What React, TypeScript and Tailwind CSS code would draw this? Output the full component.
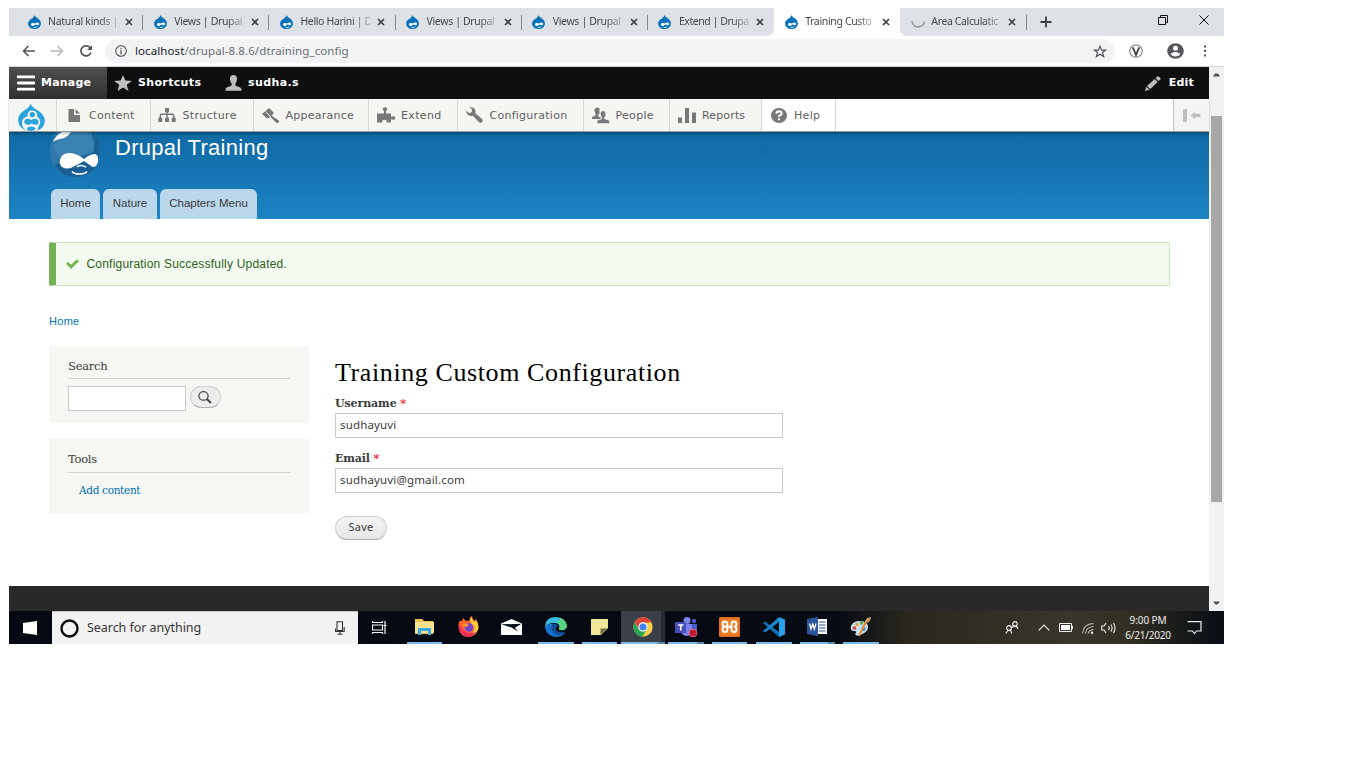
import React from "react";

const ui = "font-['Noto_Sans',sans-serif]";

function DropFavicon() {
  return (
    <svg width="13" height="14" viewBox="0 0 13 14">
      <path d="M6.600 0C7 2 9 2.600 10.600 4C12 5.200 12.900 6.600 12.900 8.400C12.900 11.600 10 14 6.500 14C3 14 .1 11.700 .1 8.400C.1 6.500 1.300 5.200 3 4C4.800 2.800 6 2 6.600 0Z" fill="#0b73b9" />
      <path d="M3 9.200C3.200 7.600 5.400 7.600 7 8.600C8.400 7.600 9.400 7.200 10.400 7.800C11.800 9 10.600 10.600 9.400 10.200C8.600 9.900 8 9.400 7.300 9.600C6.300 10.400 5.800 11 4.600 10.900C3.500 10.800 2.900 10.200 3 9.200Z" fill="#fff" />
      <path d="M5.600 12.300Q7.500 13 9 11.900" stroke="#fff" strokeWidth=".8" fill="none" />
    </svg>
  );
}

function TabClose() {
  return (
    <svg width="8" height="8" viewBox="0 0 8 8" className="shrink-0">
      <path d="M1 1L7 7M7 1L1 7" stroke="#3c4043" strokeWidth="1.700" />
    </svg>
  );
}

type TabProps = { title: string; track: string; active?: boolean; before?: boolean; loading?: boolean; noLine?: boolean };

function BrowserTab({ title, track, active, before, loading, noLine }: TabProps) {
  return (
    <div
      className={`flex h-[28px] w-[126.200px] shrink-0 items-center pl-[10.500px] ${
        active ? "rounded-t-[7px] bg-white" : "bg-[#dee1e6]"
      } ${before ? "rounded-br-[7px]" : ""} ${loading ? "rounded-bl-[7px]" : ""}`}
    >
      <div className="flex w-[20.500px] shrink-0 items-center">
        {loading ? (
          <svg width="15" height="14" viewBox="0 0 15 14">
            <path d="M1 6A6.300 6.300 0 0 0 13.500 6.500" stroke="#9a9da1" strokeWidth="1.700" fill="none" />
          </svg>
        ) : (
          <DropFavicon />
        )}
      </div>
      <div className={`${ui} w-[70px] text-[10.500px] whitespace-nowrap text-[#45484c] [mask-image:linear-gradient(90deg,#000_74%,#0004_100%)] ${track}`}>
        {title}
      </div>
      <div className="ml-[7px] flex">
        <TabClose />
      </div>
      {!noLine && <div className="ml-auto h-[15px] w-px bg-[#85888c]" />}
    </div>
  );
}

function TabStrip() {
  return (
    <div className="flex h-[28px] bg-white">
      <div className="h-full w-[8px] bg-[#dee1e6]" />
      <BrowserTab title="Natural kinds |" track="tracking-[-0.280px]" />
      <BrowserTab title="Views | Drupal" track="tracking-[-0.350px]" />
      <BrowserTab title="Hello Harini | D" track="tracking-[-0.350px]" />
      <BrowserTab title="Views | Drupal" track="tracking-[-0.350px]" />
      <BrowserTab title="Views | Drupal" track="tracking-[-0.350px]" />
      <BrowserTab title="Extend | Drupa" track="tracking-[-0.450px]" before noLine />
      <BrowserTab title="Training Custo" track="tracking-[-0.350px]" active noLine />
      <BrowserTab title="Area Calculatic" track="tracking-[-0.380px]" loading />
      <div className="flex flex-1 items-center bg-[#dee1e6] pl-[13px]">
        <svg width="12" height="12" viewBox="0 0 12 12">
          <path d="M6 .5V11.500M.5 6H11.500" stroke="#3c4043" strokeWidth="1.800" />
        </svg>
        <svg width="10" height="10" viewBox="0 0 10 10" className="mb-[5px] ml-[106px]">
          <path d="M.5 2.500H7.500V9.500H.5ZM2.500 2.500V.5H9.500V7.500H7.500" stroke="#111" fill="none" />
        </svg>
        <svg width="10" height="10" viewBox="0 0 10 10" className="mb-[5px] ml-[31px]">
          <path d="M.5 .5L9.500 9.500M9.500 .5L.5 9.500" stroke="#111" />
        </svg>
      </div>
    </div>
  );
}

function AddressBar() {
  return (
    <div className="flex h-[31px] items-center border-b border-[#d5d7da] bg-white pl-[13px]">
      <svg width="13" height="12" viewBox="0 0 13 12">
        <path d="M13 6H1.500M6.500 1L1.500 6L6.500 11" stroke="#505357" strokeWidth="1.600" fill="none" />
      </svg>
      <svg width="13" height="12" viewBox="0 0 13 12" className="ml-[16px]">
        <path d="M0 6H11.500M6.500 1L11.500 6L6.500 11" stroke="#b4b6b9" strokeWidth="1.500" fill="none" />
      </svg>
      <svg width="14" height="12" viewBox="0 0 14 12" className="ml-[15px]">
        <path d="M11.500 3.200A5.200 5 0 1 0 12 7.500" stroke="#505357" strokeWidth="1.700" fill="none" />
        <path d="M13 .3V5H8Z" fill="#505357" />
      </svg>
      <div className="ml-[12px] flex h-[24px] w-[1010px] items-center rounded-full bg-[#f1f3f4] pl-[10px]">
        <svg width="12" height="12" viewBox="0 0 12 12">
          <circle cx="6" cy="6" r="5.300" fill="none" stroke="#5f6368" strokeWidth="1.200" />
          <path d="M6 2.800V4.200M6 5.200V9.200" stroke="#5f6368" strokeWidth="1.400" />
        </svg>
        <div className={`${ui} ml-[8px] text-[11.500px] tracking-[0.090px] whitespace-nowrap text-[#6a6d71]`}>
          <span className="text-[#202124]">localhost</span>/drupal-8.8.6/dtraining_config
        </div>
        <svg width="14" height="13" viewBox="0 0 24 23" className="mr-[8px] ml-auto">
          <path d="M12 2L14.800 9H22L16.300 13.300L18.500 20.500L12 16.300L5.500 20.500L7.700 13.300L2 9H9.200Z" fill="none" stroke="#4e5155" strokeWidth="2" />
        </svg>
      </div>
      <svg width="14" height="14" viewBox="0 0 14 14" className="ml-[14px]">
        <circle cx="7" cy="7" r="6.200" fill="#fff" stroke="#8b8b8b" strokeWidth="1.300" />
        <path d="M3.800 3.300L7 10.800L10.200 3.300" fill="none" stroke="#444" strokeWidth="1.900" />
      </svg>
      <svg width="17" height="16" viewBox="0 0 17 16" className="ml-[24px]">
        <ellipse cx="8.500" cy="8" rx="8.300" ry="7.800" fill="#54575c" />
        <circle cx="8.500" cy="5.200" r="2.500" fill="#fff" />
        <path d="M3.500 11Q8.500 7 13.500 11Q11.500 13.600 8.500 13.600Q5.500 13.600 3.500 11Z" fill="#fff" />
      </svg>
      <svg width="3" height="12" viewBox="0 0 3 12" className="ml-[20px]">
        <path d="M0 .5h2v2H0zM0 5h2v2H0zM0 9.500h2v2H0z" fill="#505357" />
      </svg>
    </div>
  );
}

function AdminBar() {
  const label = "font-['DejaVu_Sans',sans-serif] text-[11px] font-bold text-white whitespace-nowrap pt-px";
  return (
    <div className="flex h-[32px] bg-[#0f0f0f]">
      <div className="flex w-[98px] items-center bg-linear-to-b from-[#505050] to-[#303030] pl-[8px]">
        <svg width="18" height="16" viewBox="0 0 18 16">
          <path d="M1 1.800H17M1 8H17M1 14.200H17" stroke="#fff" strokeWidth="2.800" strokeLinecap="round" />
        </svg>
        <div className={`${label} ml-[6px] tracking-[0.200px]`}>Manage</div>
      </div>
      <div className="flex w-[118px] items-center pl-[7px]">
        <svg width="18" height="16" viewBox="0 0 18 16">
          <path d="M9 0L11.300 5.600L18 6L12.700 9.800L14.500 16L9 12.400L3.500 16L5.300 9.800L0 6L6.700 5.600Z" fill="#bebebe" />
        </svg>
        <div className={`${label} ml-[6px] tracking-[0.350px]`}>Shortcuts</div>
      </div>
      <div className="flex items-center">
        <svg width="17" height="16" viewBox="0 0 17 16">
          <path d="M8.500 0C11 0 12.200 1.800 12 4.400C11.900 6.400 11.200 7.400 10.400 8.200V10.300C10.600 11.700 16.500 11.500 16.500 14.500V15.800H.5V14.500C.5 11.500 6.400 11.700 6.600 10.300V8.200C5.800 7.400 5.100 6.400 5 4.400C4.800 1.800 6 0 8.500 0Z" fill="#bebebe" />
        </svg>
        <div className={`${label} ml-[6px] tracking-[0.400px]`}>sudha.s</div>
      </div>
      <div className="ml-auto flex items-center pr-[15px]">
        <svg width="16" height="15" viewBox="0 0 16 15">
          <path d="M0 15L1.300 10.800L4.600 13.700ZM2 10L9.600 3L12.800 5.900L5.300 13ZM10.500 2.200L12.300 .6Q13 0 13.700 .6L15.500 2.200Q16 2.900 15.400 3.500L13.700 5.100Z" fill="#bebebe" />
        </svg>
        <div className={`${label} ml-[8px] tracking-[0.200px]`}>Edit</div>
      </div>
    </div>
  );
}

const g = "#787878";

function TrayItem({ w, pl, iconW, label, last, icon, track }: { w: string; pl: string; iconW: string; label: string; last?: boolean; icon: React.ReactNode; track: string }) {
  return (
    <div className={`flex h-full shrink-0 items-center border-r border-[#d7d7d5] ${w} ${pl} ${last ? "bg-white" : "bg-[#f5f5f2]"}`}>
      <div className={`shrink-0 ${iconW}`}>{icon}</div>
      <div className={`pt-[2px] font-['DejaVu_Sans',sans-serif] text-[11px] whitespace-nowrap text-[#606060] ${track}`}>{label}</div>
    </div>
  );
}

function AdminTray() {
  return (
    <div className="relative z-10 flex h-[33px] border-b border-[#9a9a96] bg-white shadow-[0_2px_2px_rgba(0,0,0,0.250)]">
      <div className="flex w-[48px] items-start justify-center border-r border-[#d7d7d5] bg-[#f5f5f2] pt-[4px] pr-[2px]">
        <svg width="27" height="28" viewBox="0 0 27 28">
          <path d="M12.500 0C13 3.800 17 5.500 20 7.500C24.500 10.500 26.800 13.500 26.800 17.500C26.800 21.500 25 24.500 22 26.500L19.500 27.300C13 28.500 9.500 28 6.500 26.700C2.500 24.500 .2 21.500 .2 17C.2 12.500 3 9.500 6.500 7.200C9.500 5 12.400 3.500 12.500 0Z" fill="#2ba3dc" />
          <path d="M14 7.600C18 7.600 20 10.500 18.800 13.500C22.800 15.500 23 20.500 20.500 23.500L19.500 27.600H8L5.200 24.500C3 20.500 3.600 15.700 7.600 14.200C9.200 13.600 9.800 13 9.700 11.700C9.800 9.200 11.500 7.600 14 7.600Z" fill="#f5f5f2" />
          <circle cx="14.300" cy="11.700" r="2.600" fill="#2ba3dc" />
          <path d="M6.300 18.800C6.400 15.600 10.500 14.800 13.300 17.300C16 14.900 20.600 15.500 20.600 19C20.500 22.300 16.500 22.500 13.800 20.600C10.500 22.800 6.300 22 6.300 18.800Z" fill="#2ba3dc" />
          <path d="M8.500 25.300Q13 21.700 18 25.300Q16 28 12.500 28Q10 27.800 8.500 25.300Z" fill="#2ba3dc" />
        </svg>
      </div>
      <TrayItem w="w-[94px]" pl="pl-[11px]" iconW="w-[21px]" label="Content" track="tracking-[0.250px]"
        icon={<svg width="12" height="13" viewBox="0 0 12 13"><path d="M.5 0H6V6H12V13H.5ZM7.500 0L12 4.500H7.500Z" fill={g} /></svg>} />
      <TrayItem w="w-[103px]" pl="pl-[7px]" iconW="w-[24.500px]" label="Structure" track="tracking-[0.350px]"
        icon={<svg width="18" height="14" viewBox="0 0 18 14"><path d="M7 0h4v4.200h-4zM.3 9.800h4V14h-4zM7 9.800h4V14h-4zM13.700 9.800h4V14h-4z" fill={g} /><path d="M9 3V10M2.300 10V7.500Q2.300 6.300 3.500 6.300H14.500Q15.700 6.300 15.700 7.500V10" fill="none" stroke={g} strokeWidth="1.500" /></svg>} />
      <TrayItem w="w-[115px]" pl="pl-[8px]" iconW="w-[23.500px]" label="Appearance" track="tracking-[0.250px]"
        icon={<svg width="18" height="15" viewBox="0 0 18 15"><path d="M0 6L7 0L11.600 4.500Q11.800 6.500 9.600 7.400L16.800 12.600Q17.400 14.200 16 15Q14.800 15.200 14 14.400L8.200 8.700Q6.800 10.400 4.700 10.200Z" fill={g} /><path d="M3.400 3.600L8.700 8.700" stroke="#f5f5f2" /></svg>} />
      <TrayItem w="w-[89px]" pl="pl-[8px]" iconW="w-[24px]" label="Extend" track="tracking-[0.350px]"
        icon={<svg width="19" height="16" viewBox="0 0 19 16"><path d="M6 1Q8 -.5 10 1Q10.500 3.500 9 4V6.500H14V9.800Q18.400 8.300 18.400 11Q18.400 13.500 14 12.200V15.500H9.500V13.500Q7.300 12 5.300 13.500V15.500H0V6.500H7V4Q5.500 3.500 6 1Z" fill={g} /></svg>} />
      <TrayItem w="w-[126px]" pl="pl-[8px]" iconW="w-[23.500px]" label="Configuration" track="tracking-[0.250px]"
        icon={<svg width="17" height="16" viewBox="0 0 17 16"><path d="M3.300 .3Q7.500 -.3 9 2.500Q9.800 4.300 9.200 6L16.300 12.300Q17.300 14.300 15.500 15.500Q13.800 16.300 12.600 14.800L6.800 8.700Q4.500 9.800 2 8Q.2 6.500 0 3.800L3.500 6.300L6 4.800L5.800 2.200Z" fill={g} /></svg>} />
      <TrayItem w="w-[86px]" pl="pl-[8px]" iconW="w-[23.500px]" label="People" track="tracking-[0.300px]"
        icon={<svg width="18" height="17" viewBox="0 0 18 17"><path d="M2.500 2.500Q5 -1 7.500 1.500V7H6.500V10H8.500V12H0V10.500Q0 9.500 3.500 8.500V6.500Q2.300 4.500 2.500 2.500Z" fill={g} /><path d="M8.500 5Q11 2.500 13.700 5V8.500L12.700 10V12Q17.500 13 17.500 14V16.500H5V14Q5 13 9.600 12V10L8.500 8.500Z" fill={g} stroke="#f5f5f2" strokeWidth=".6" /></svg>} />
      <TrayItem w="w-[92px]" pl="pl-[8px]" iconW="w-[24px]" label="Reports" track="tracking-[0.150px]"
        icon={<svg width="18" height="15" viewBox="0 0 18 15"><path d="M0 9.500h4V15H0zM7 0h4v15H7zM14 4.500h4V15h-4z" fill={g} /></svg>} />
      <TrayItem w="w-[74px]" pl="pl-[9px]" iconW="w-[23px]" label="Help" track="tracking-[0.300px]" last
        icon={<svg width="16" height="15" viewBox="0 0 16 15"><ellipse cx="8" cy="7.500" rx="8" ry="7.500" fill={g} /><path d="M5.300 5.600Q5.500 3.200 8 3.200Q10.800 3.300 10.700 5.500Q10.500 6.700 8.900 7.400Q8 8 8 9M8 10.300V12.200" fill="none" stroke="#fff" strokeWidth="1.900" /></svg>} />
      <div className="ml-auto flex h-full w-[36px] items-center border-l border-[#c4c4c4] bg-[#f4f4f4] pl-[9px]">
        <svg width="18" height="13" viewBox="0 0 18 13">
          <path d="M0 0h4v13H0zM7.500 6.500L12 3V4.800H17.300V8.200H12V10Z" fill="#bfbfbf" />
        </svg>
      </div>
    </div>
  );
}

function SiteHeader() {
  const tab = "flex h-[30px] items-center justify-center rounded-t-[6px] bg-[#bbd7eb] font-['Liberation_Sans',sans-serif] text-[#3a3a3a] whitespace-nowrap";
  return (
    <div className="flex h-[87px] flex-col justify-between bg-linear-to-b from-[#0f69a3] to-[#1d84c4]">
      <div className="flex h-[47px] overflow-hidden pl-[40px]">
        <svg width="52" height="46" viewBox="0 0 52 46">
          <defs><clipPath id="drop"><path d="M8 0H44Q51 8 51 21Q50 34 41 41Q26 49 11 41Q1 34 1 20Q1 8 8 0Z" /></clipPath></defs>
          <path d="M8 0H44Q51 8 51 21Q50 34 41 41Q26 49 11 41Q1 34 1 20Q1 8 8 0Z" fill="#2f79aa" />
          <g clipPath="url(#drop)">
            <path d="M42 0Q49 15 41 22Q25 23 6 33Q13 47 29 46Q51 43 52 22V0Z" fill="#195f93" />
            <path d="M22 0H36Q47 8 45 20Q39 22 33 25Q21 16 12 26Q4 17 4 12Z" fill="#4489b5" opacity=".5" />
          </g>
          <path d="M4 10Q7 3 13 0H22Q18 6 11 7Q6 8 4 10Z" fill="#fff" />
          <path d="M11 28Q13 20 22 21Q29 22 35 27Q41 22 46 22Q50 23 49 30Q47 37 42 34Q38 31 35 29Q30 32 24 35Q18 38 13 35Q10 32 11 28Z" fill="#fff" />
          <path d="M28 35Q31 32 37 35M23 39.500Q25 42 30 42Q36 42 38 39.500" stroke="#fff" strokeWidth="1.600" fill="none" />
        </svg>
        <div className="mt-[3px] ml-[14px] font-['Liberation_Sans',sans-serif] text-[22px] leading-[26px] tracking-[0.290px] whitespace-nowrap text-white">Drupal Training</div>
      </div>
      <div className="flex gap-[3px] pl-[42px]">
        <div className={`${tab} w-[49px] text-[11.500px]`}>Home</div>
        <div className={`${tab} w-[54px] text-[11.500px]`}>Nature</div>
        <div className={`${tab} w-[97px] text-[11.500px]`}>Chapters Menu</div>
      </div>
    </div>
  );
}

function Field({ label, value, track, labelTrack }: { label: string; value: string; track: string; labelTrack: string }) {
  return (
    <div>
      <div className={`h-[17px] font-['DejaVu_Serif',serif] text-[11px] leading-[15px] font-bold text-[#3b3b3b] ${labelTrack}`}>
        {label} <span className="text-[#f01c24]">*</span>
      </div>
      <div className={`${ui} flex h-[25px] w-[448px] items-center border border-[#c9c9c9] bg-white pb-[1px] pl-[4px] text-[11.500px] text-[#3b3b3b] ${track}`}>{value}</div>
    </div>
  );
}

function PageBody() {
  const blockTitle = "border-b border-[#d3d5d0] font-['DejaVu_Serif',serif] text-[11.500px] leading-[15px] text-[#3b3b3b] tracking-[-0.250px]";
  return (
    <div className="flex flex-1 flex-col bg-white pt-[23px] pl-[40px]">
      <div className="flex h-[44px] w-[1121px] items-center rounded-[2px] border border-l-[7px] border-[#c9e1bd] border-l-[#77b259] bg-[#f3faef] pl-[9.500px]">
        <svg width="13" height="10" viewBox="0 0 13 10">
          <path d="M0 4.800L2.200 3L5 5.800L11 .3L13 2.200L5 10Z" fill="#73b355" />
        </svg>
        <div className="ml-[8px] font-['Liberation_Sans',sans-serif] text-[12px] tracking-[0.200px] text-[#325e1c]">Configuration Successfully Updated.</div>
      </div>
      <div className="mt-[27px] h-[16px] font-['Liberation_Sans',sans-serif] text-[11px] leading-[16px] tracking-[0.300px] text-[#0071b3]">Home</div>
      <div className="mt-[17px] flex">
        <div className="flex w-[260px] flex-col gap-[16px]">
          <div className="h-[77px] bg-[#f6f6f2] px-[19px] pt-[13px]">
            <div className={`${blockTitle} h-[20px]`}>Search</div>
            <div className="mt-[7px] flex gap-[4px]">
              <div className="h-[25px] w-[118px] border border-[#c9c9c9] bg-white" />
              <div className="flex h-[22px] w-[31px] items-center justify-center rounded-full border border-[#cfcfcf] border-b-[#b0b0b0] bg-[#ededed] pr-[2px]">
                <svg width="14" height="13" viewBox="0 0 14 13">
                  <ellipse cx="5.500" cy="4.900" rx="4.600" ry="4.300" fill="none" stroke="#4a4a4a" strokeWidth="1.300" />
                  <path d="M8.500 7.800L13 12" stroke="#4a4a4a" strokeWidth="2.200" />
                </svg>
              </div>
            </div>
          </div>
          <div className="h-[74px] bg-[#f6f6f2] px-[19px] pt-[13px]">
            <div className={`${blockTitle} h-[21px]`}>Tools</div>
            <div className="mt-[9px] pl-[11px] font-['DejaVu_Serif',serif] text-[10.500px] leading-[16px] tracking-[-0.320px] text-[#0071b3]">Add content</div>
          </div>
        </div>
        <div className="ml-[26px] pt-[10px]">
          <div className="h-[40px] font-['Liberation_Serif',serif] text-[26px] leading-[34px] tracking-[0.600px] whitespace-nowrap text-black">Training Custom Configuration</div>
          <div className="flex flex-col gap-[13px]">
            <Field label="Username" value="sudhayuvi" track="tracking-[0.150px]" labelTrack="tracking-[-0.100px]" />
            <Field label="Email" value="sudhayuvi@gmail.com" track="tracking-[0.160px]" labelTrack="tracking-[-0.150px]" />
          </div>
          <div className={`${ui} mt-[23px] flex h-[24px] w-[52px] items-center justify-center rounded-full border border-[#cfcfcf] border-b-[#aaa] bg-linear-to-b from-[#f3f3f3] to-[#e7e7e7] pb-px text-[11px] tracking-[0.200px] text-[#3a3a3a]`}>Save</div>
        </div>
      </div>
    </div>
  );
}

function Scrollbar() {
  return (
    <div className="flex w-[15px] flex-col items-center bg-[#f1f1f1] pt-[6px] pb-[6px]">
      <svg width="7" height="4" viewBox="0 0 7 4"><path d="M0 3.500L2 .5H5L7 3.500Z" fill="#505050" /></svg>
      <div className="mt-[39px] h-[386px] w-[11px] bg-[#a8a8a8]" />
      <svg width="7" height="4" viewBox="0 0 7 4" className="mt-auto"><path d="M0 .5H7L4.500 3.500H2.500Z" fill="#505050" /></svg>
    </div>
  );
}

function TaskIcon({ bar, active, w, extra, children }: { bar?: boolean; active?: boolean; w?: string; extra?: boolean; children: React.ReactNode }) {
  return (
    <div className={`flex h-full w-[43.600px] shrink-0 flex-col items-center ${active ? "bg-[linear-gradient(90deg,#3b4048_90%,#272c33_91%)]" : ""}`}>
      <div className="flex h-[31px] items-center">{children}</div>
      {bar && (
        <div className={`flex h-[2px] justify-end bg-[#76b9ed] ${w ?? "w-[36px]"}`}>{extra && <div className="h-full w-[7px] bg-[#5688ae]" />}</div>
      )}
    </div>
  );
}

function Taskbar() {
  return (
    <div className="flex h-[33px] bg-[linear-gradient(90deg,#050a12_0px,#060b13_830px,#2b271f_900px,#39352a_1060px,#322f23_1120px,#151819_1180px,#070e15_1215px)]">
      <div className="flex w-[43px] items-center justify-center pr-[2px]">
        <svg width="14" height="14" viewBox="0 0 14 14"><path d="M0 2L14 0V14L0 12Z" fill="#fff" /></svg>
      </div>
      <div className="flex w-[306px] items-center border-t border-[#c8c8c8] bg-[#f2f2f2] pl-[8px]">
        <svg width="19" height="19" viewBox="0 0 19 19"><circle cx="9.500" cy="9.500" r="8" fill="none" stroke="#0a0a0a" strokeWidth="2.400" /></svg>
        <div className={`${ui} ml-[8px] pt-px text-[12.500px] tracking-[-0.050px] whitespace-nowrap text-[#363636]`}>Search for anything</div>
        <svg width="10" height="14" viewBox="0 0 10 14" className="mr-[13px] ml-auto">
          <path d="M2 .7H7.500V9.500H2ZM.5 7.500V10.500H9.200V6M5 10.500V13M2.500 13.200H7.500" fill="none" stroke="#333" strokeWidth="1.100" />
        </svg>
      </div>
      <div className="flex w-[45px] items-center justify-center pr-[2px]">
        <svg width="15" height="13" viewBox="0 0 15 13">
          <path d="M.5 0V1.500H10.500V0M.5 13V11.500H10.500V13M.5 4H10.500V9H.5ZM13 0V13M11.500 4.500H14.500" fill="none" stroke="#f5f5f5" strokeWidth="1.200" />
        </svg>
      </div>
      <TaskIcon bar w="w-[35px]">
        <svg width="19" height="16" viewBox="0 0 19 16"><path d="M0 0H7L9 2H18V15H0Z" fill="#efc451" /><path d="M0 3H19V14H0Z" fill="#fce08d" /><path d="M3 9H16V16H13V12H6V16H3Z" fill="#38a9e0" /></svg>
      </TaskIcon>
      <TaskIcon>
        <svg width="21" height="21" viewBox="0 0 21 21">
          <path d="M2 4Q3 6 4 5L5 2L8 5Q10 5 12 4Q11 1 14 0Q14 3 17 5L18 3Q22 10 20 14Q17 21 10 21Q2 20 1 13Q-.5 9 2 4Z" fill="#ff6a2c" />
          <path d="M13 1Q14 4 17 6L18 4Q22 10 19 15Q16 21 11 20Q18 15 16 10Q13 8 12 4Z" fill="#ffce3a" />
          <path d="M1 9Q0 19 10 21Q16 20 18 16Q10 19 5 14Q3 10 1 9Z" fill="#f22c5a" />
          <circle cx="11" cy="11.500" r="4.300" fill="#7443cf" /><path d="M5 8Q8 7 11 9L8 11Q6 11 5 8Z" fill="#ff9b2e" />
        </svg>
      </TaskIcon>
      <TaskIcon>
        <svg width="21" height="16" viewBox="0 0 21 16"><path d="M0 4.500L10.500 0L21 4.500V16H0Z" fill="#fff" /><path d="M0 5.300L20.500 4.800L14 8.800L17 12.500L10.500 8.500Z" fill="#07101a" /></svg>
      </TaskIcon>
      <TaskIcon bar>
        <svg width="22" height="20" viewBox="0 0 22 20">
          <path d="M0 11Q0 0 11 0Q21 1 22 9Q21 14 15 13Q13 12 14.500 10.500Q15 6 9 6Q2 6 0 11Z" fill="#38bde0" />
          <path d="M11 0Q21 1 22 9Q21 14 15 13Q13 12 14.500 10.500Q15 7 12 5Q17 3 13 .2Z" fill="#5bd37d" />
          <path d="M0 10Q3 6 8 7Q6 9 7 13Q10 17 17 16Q20 15 20 16Q16 20 11 20Q1 19 0 10Z" fill="#1675cf" />
          <path d="M8 7Q12 6 13 9Q10 10 11 13Q14 16 19 15Q16 19 11 18Q4 14 8 7Z" fill="#124f98" />
        </svg>
      </TaskIcon>
      <TaskIcon bar w="w-[35px]">
        <svg width="17" height="16" viewBox="0 0 17 16"><path d="M0 0H17V9L10 16H0Z" fill="#f2e698" /><path d="M9.500 16V9.500H17Z" fill="#757048" /></svg>
      </TaskIcon>
      <TaskIcon bar active w="w-full" extra>
        <svg width="20" height="20" viewBox="0 0 20 20">
          <circle cx="10" cy="10" r="9.700" fill="#fbd04a" />
          <path d="M1.600 5.200A9.700 9.700 0 0 1 18.400 5.200L10 6L6 12Z" fill="#e24438" />
          <path d="M1.600 5.200L6 12.500L13.500 13L9.500 19.700A9.700 9.700 0 0 1 1.600 5.200Z" fill="#2da653" />
          <circle cx="10" cy="10" r="4.700" fill="#fff" /><circle cx="10" cy="10" r="3.600" fill="#4285f4" />
        </svg>
      </TaskIcon>
      <TaskIcon bar extra>
        <svg width="23" height="20" viewBox="0 0 23 20">
          <circle cx="12" cy="3.500" r="3.500" fill="#7b83eb" /><circle cx="19" cy="4" r="2.200" fill="#5059c9" />
          <path d="M15 7H22V13Q22 17 17 17Z" fill="#5059c9" /><path d="M6 7H17V13Q16 19 11 19Q6 18 6 13Z" fill="#7b83eb" />
          <path d="M0 5H11V16H0Z" fill="#464eb8" /><path d="M3 8H8.500M5.700 8V13.500" stroke="#fff" strokeWidth="1.600" />
          <circle cx="18" cy="16" r="4" fill="#c51834" stroke="#e0a0aa" strokeWidth=".6" />
        </svg>
      </TaskIcon>
      <TaskIcon bar w="w-[35px]">
        <svg width="21" height="20" viewBox="0 0 21 20"><rect width="21" height="20" rx="1.500" fill="#f07d29" /><rect x="1" y="1" width="19" height="18" fill="none" stroke="#d8600f" />
          <path d="M8 9.800H6Q3.500 9.500 3.500 7Q3.500 4.500 6 4.500Q8.300 4.600 8.300 7V9.800H12.500V7Q12.700 4.500 15 4.500Q17.500 4.600 17.500 7.200Q17.500 9.500 15 9.800M6 9.800Q3.500 10 3.500 12.500Q3.500 15 6 15Q8.300 15 8.300 13V10M12.500 10V13Q12.700 15 15 15Q17.500 15 17.500 12.500Q17.500 10 15 9.800" fill="none" stroke="#fff" strokeWidth="1.900" /></svg>
      </TaskIcon>
      <TaskIcon bar>
        <svg width="22" height="20" viewBox="0 0 22 20"><path d="M0 6L2 4.500L16 15V20Z" fill="#0f70b3" /><path d="M0 14L2 15.500L16 5V0Z" fill="#1787ca" /><path d="M16 0L22 2.500V17.500L16 20Z" fill="#29a0ea" /></svg>
      </TaskIcon>
      <TaskIcon bar w="w-[35px]" extra>
        <svg width="20" height="19" viewBox="0 0 20 19"><path d="M10 2H20V17H10Z" fill="#fff" /><path d="M12 5H18.500M12 8H18.500M12 11H18.500M12 14H18.500" stroke="#2b579a" /><path d="M0 2L11 0V19L0 17Z" fill="#2b579a" /><path d="M2.500 6.500L4 12L5.700 7L7.300 12L9 6.500" fill="none" stroke="#fff" strokeWidth="1.300" /></svg>
      </TaskIcon>
      <TaskIcon bar>
        <svg width="22" height="20" viewBox="0 0 22 20">
          <path d="M1 9Q3 4 10 4Q18 4 18 10Q18 14 14 16Q7 21 5 17Q8 14 4 14Q0 14 1 9Z" fill="#c9dceb" />
          <circle cx="4.500" cy="11" r="1.700" fill="#d6443b" /><circle cx="7" cy="7.500" r="1.700" fill="#e5a836" /><circle cx="11.500" cy="6" r="1.700" fill="#58a944" /><circle cx="13.500" cy="12" r="2" fill="#3986c8" />
          <path d="M17 5L10 19Q8 20 9 17L15 4Z" fill="#e08b2f" /><path d="M15 4L17 1L21 0L20 4L17 6Z" fill="#c99a6c" />
        </svg>
      </TaskIcon>
      <div className="ml-auto flex items-center">
        <svg width="14" height="13" viewBox="0 0 14 13"><path d="M.7 12.500L3 9.500H5.500L7 12.500M7 6.500L9 5H11L13.200 7.500" fill="none" stroke="#eee" strokeWidth="1.200" /><circle cx="4" cy="7" r="2.300" fill="none" stroke="#eee" strokeWidth="1.200" /><circle cx="10" cy="3" r="2.300" fill="none" stroke="#eee" strokeWidth="1.200" /></svg>
        <svg width="12" height="7" viewBox="0 0 12 7" className="ml-[19px]"><path d="M.7 6.300L6 1L11.300 6.300" fill="none" stroke="#eee" strokeWidth="1.200" /></svg>
        <svg width="14" height="9" viewBox="0 0 14 9" className="ml-[9px]"><path d="M.5 .5H12.500V8.500H.5Z" fill="none" stroke="#eee" /><path d="M2 2H11V7H2ZM13 3H14V6H13Z" fill="#fff" /></svg>
        <svg width="12" height="12" viewBox="0 0 12 12" className="ml-[9px]"><path d="M.7 11.500Q1 2 11.500 1.500M3.500 11.500Q4 5 11.500 4.500M6.300 11.500Q6.500 8 11.500 7.500" fill="none" stroke="#c5c4bf" strokeWidth="1.100" /><circle cx="10" cy="10.700" r="1.200" fill="#eee" /></svg>
        <svg width="15" height="12" viewBox="0 0 15 12" className="ml-[7px]"><path d="M5 1L3 4H.7V8H3L5 11M7.500 4Q9 6 7.500 8M10 2.500Q12.200 6 10 9.500M12.500 1Q15.500 6 12.500 11" fill="none" stroke="#eee" strokeWidth="1.100" /></svg>
        <div className={`${ui} ml-[8px] w-[48px] text-center text-[10px] leading-[15px] whitespace-nowrap text-[#eee]`}>
          <div className="tracking-[-0.100px]">9:00 PM</div>
          <div className="tracking-[-0.200px]">6/21/2020</div>
        </div>
        <svg width="15" height="14" viewBox="0 0 15 14" className="mr-[22px] ml-[15px]"><path d="M.5 .7H14V10H9.500L7.500 12.500L5.500 10H.5" fill="none" stroke="#eee" strokeWidth="1.200" /></svg>
      </div>
    </div>
  );
}

export default function App() {
  return (
    <div className="h-screen w-screen overflow-hidden bg-white pt-[8px] pl-[9px]">
      <div className="flex h-[636px] w-[1215px] flex-col">
        <TabStrip />
        <AddressBar />
        <div className="flex h-[544px]">
          <div className="flex w-[1200px] flex-col">
            <AdminBar />
            <AdminTray />
            <SiteHeader />
            <PageBody />
            <div className="h-[25px] shrink-0 bg-[#292929]" />
          </div>
          <Scrollbar />
        </div>
        <Taskbar />
      </div>
    </div>
  );
}
